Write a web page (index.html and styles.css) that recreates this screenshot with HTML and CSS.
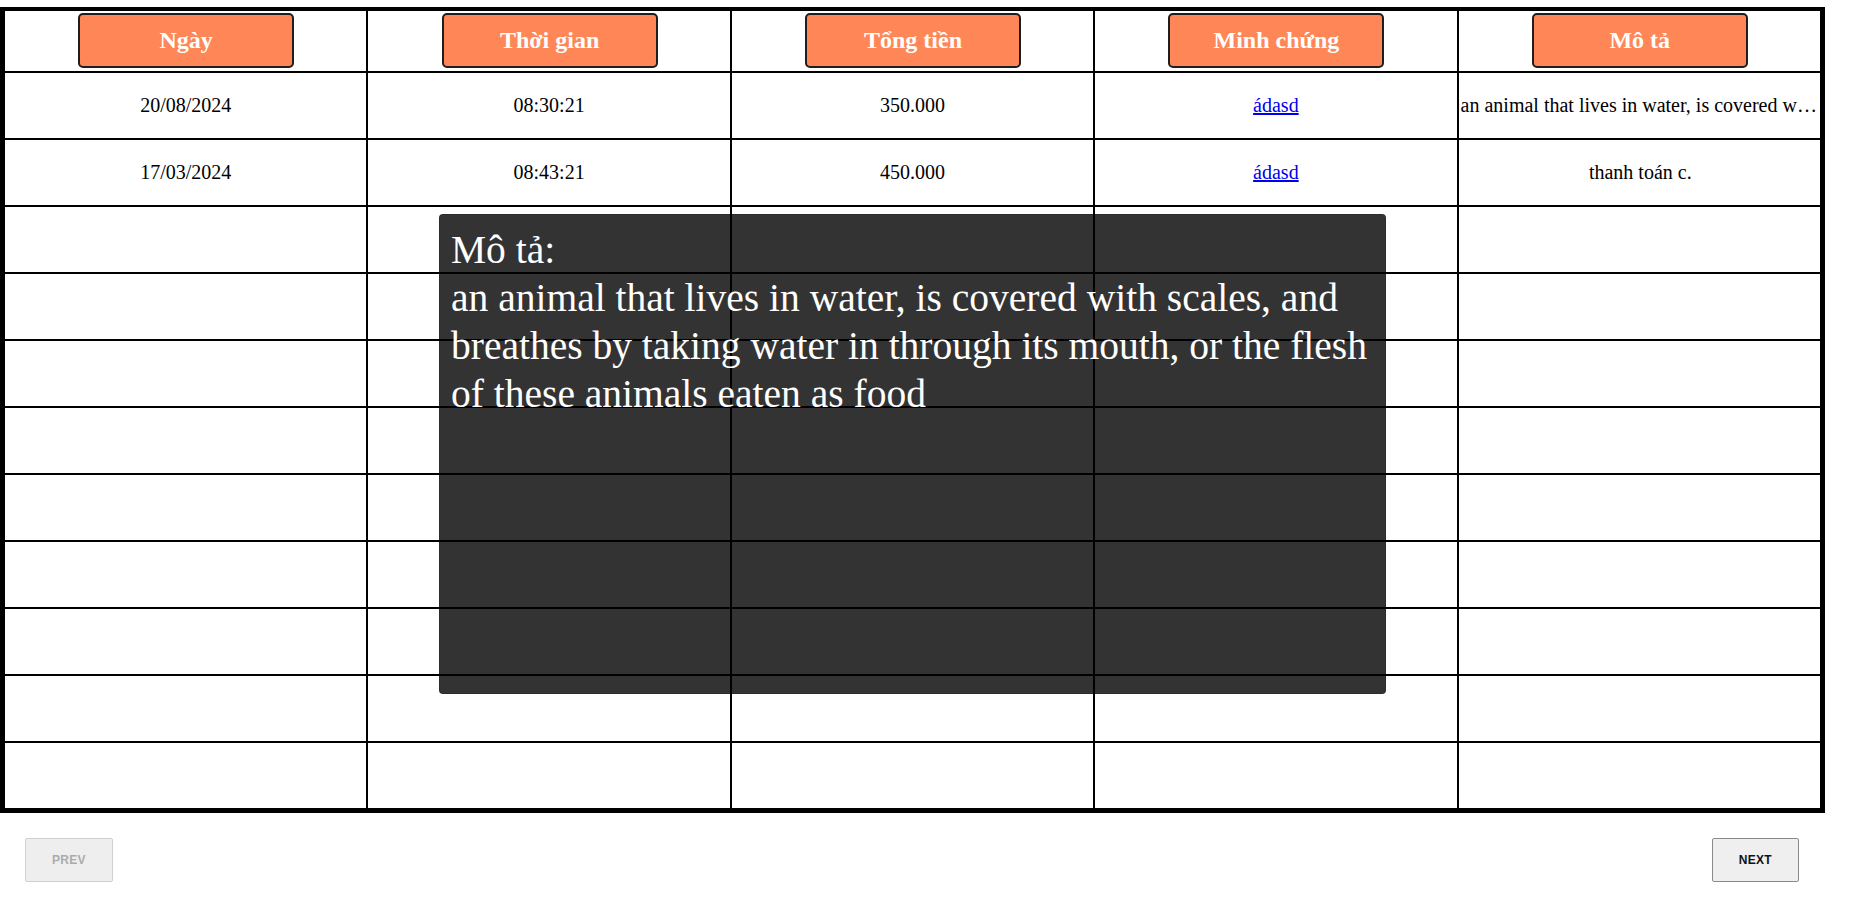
FILE: index.html
```html
<!DOCTYPE html>
<html lang="vi">
<head>
<meta charset="utf-8">
<title>Lịch sử thanh toán</title>
<link rel="stylesheet" href="styles.css">
</head>
<body>
<div class="page">
  <div class="table-wrap">
    <div class="grid">
      <div class="cell head"><span class="head-btn">Ngày</span></div>
      <div class="cell head"><span class="head-btn">Thời gian</span></div>
      <div class="cell head"><span class="head-btn">Tổng tiền</span></div>
      <div class="cell head"><span class="head-btn">Minh chứng</span></div>
      <div class="cell head"><span class="head-btn">Mô tả</span></div>

      <div class="cell">20/08/2024</div>
      <div class="cell">08:30:21</div>
      <div class="cell">350.000</div>
      <div class="cell"><a href="#" class="link">ádasd</a></div>
      <div class="cell desc"><span class="clip">an animal that lives in water, is covered with scales, and breathes by taking water in through its mouth, or the flesh of these animals eaten as food</span></div>

      <div class="cell">17/03/2024</div>
      <div class="cell">08:43:21</div>
      <div class="cell">450.000</div>
      <div class="cell"><a href="#" class="link">ádasd</a></div>
      <div class="cell desc"><span class="clip">thanh toán c.</span></div>

      <div class="cell"></div><div class="cell"></div><div class="cell"></div><div class="cell"></div><div class="cell"></div>
      <div class="cell"></div><div class="cell"></div><div class="cell"></div><div class="cell"></div><div class="cell"></div>
      <div class="cell"></div><div class="cell"></div><div class="cell"></div><div class="cell"></div><div class="cell"></div>
      <div class="cell"></div><div class="cell"></div><div class="cell"></div><div class="cell"></div><div class="cell"></div>
      <div class="cell"></div><div class="cell"></div><div class="cell"></div><div class="cell"></div><div class="cell"></div>
      <div class="cell"></div><div class="cell"></div><div class="cell"></div><div class="cell"></div><div class="cell"></div>
      <div class="cell"></div><div class="cell"></div><div class="cell"></div><div class="cell"></div><div class="cell"></div>
      <div class="cell"></div><div class="cell"></div><div class="cell"></div><div class="cell"></div><div class="cell"></div>
      <div class="cell"></div><div class="cell"></div><div class="cell"></div><div class="cell"></div><div class="cell"></div>
    </div>
    <div class="tooltip">
      <div>Mô tả:</div>
      <div>an animal that lives in water, is covered with scales, and breathes by taking water in through its mouth, or the flesh of these animals eaten as food</div>
    </div>
  </div>
  <div class="pager">
    <button class="btn" disabled>PREV</button>
    <button class="btn">NEXT</button>
  </div>
</div>
</body>
</html>
```
FILE: styles.css
```css
html {
  background: #ffffff;
}
body {
  margin: 0;
  font-family: "Liberation Serif", "Times New Roman", serif;
  color: #000;
}
::-webkit-scrollbar {
  width: 19px;
}
::-webkit-scrollbar-track {
  background: #f8f8f8;
}
::-webkit-scrollbar-thumb {
  background: #b6b6b6;
  border-radius: 8px;
  border-style: solid;
  border-color: transparent;
  border-width: 3px 3px 3px 4px;
  background-clip: padding-box;
}
.page {
  padding-top: 7px;
  padding-bottom: 58px;
}
.table-wrap {
  position: relative;
  width: 1825px;
}
.grid {
  display: grid;
  grid-template-columns: repeat(5, 1fr);
  grid-template-rows: 60px repeat(11, 65px);
  gap: 2px;
  background: #000;
  border-style: solid;
  border-color: #000;
  border-width: 4px 5px 5px 5px;
}
.cell {
  background: #fff;
  display: flex;
  align-items: center;
  justify-content: center;
  font-size: 20px;
  min-width: 0;
  overflow: hidden;
}
.head {
  align-items: flex-start;
  padding-top: 2px;
}
.head-btn {
  box-sizing: border-box;
  width: 216px;
  height: 55px;
  display: flex;
  align-items: center;
  justify-content: center;
  background: #ff8757;
  border: 2px solid #1e1e1e;
  border-radius: 5px;
  color: #fff;
  font-weight: bold;
  font-size: 24px;
  margin-left: 1px;
}
.link {
  color: #0000ee;
  text-decoration: underline;
}
.clip {
  display: block;
  white-space: nowrap;
  overflow: hidden;
  text-overflow: ellipsis;
  max-width: 100%;
  padding-left: 2px;
}
.tooltip {
  position: absolute;
  left: 439px;
  top: 207px;
  box-sizing: border-box;
  width: 947px;
  height: 480px;
  padding: 11px 8px 0 11px;
  background: rgba(0, 0, 0, 0.8);
  border: 1px solid rgba(0, 0, 0, 0.15);
  border-radius: 4px;
  color: #fff;
  font-size: 39.5px;
  line-height: 48px;
}
.pager {
  width: 1825px;
  box-sizing: border-box;
  margin-top: 25px;
  padding: 0 26px 0 25px;
  display: flex;
  justify-content: space-between;
}
.btn {
  height: 44px;
  padding: 0 26px;
  font-family: "Liberation Sans", Arial, sans-serif;
  font-weight: bold;
  font-size: 12px;
  letter-spacing: 0.3px;
  background: #efefef;
  color: #111;
  border: 1px solid #8a8a8a;
  border-radius: 2px;
}
.btn:disabled {
  background: #eeeeee;
  color: #ababab;
  border-color: #d0d0d0;
}
```
